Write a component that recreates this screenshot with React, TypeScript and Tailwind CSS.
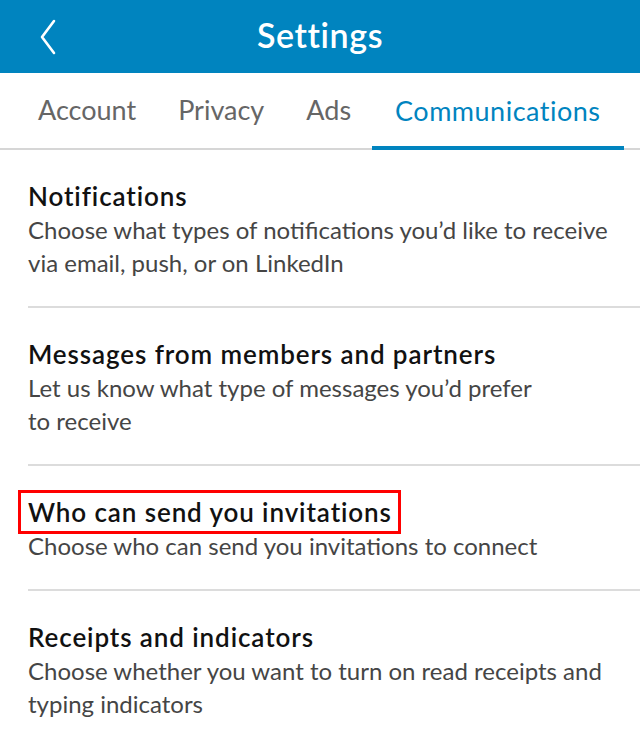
const tabs = ["Account", "Privacy", "Ads", "Communications"];

const sections = [
  {
    title: "Notifications",
    desc: ["Choose what types of notifications you’d like to receive", "via email, push, or on LinkedIn"],
  },
  {
    title: "Messages from members and partners",
    desc: ["Let us know what type of messages you’d prefer", "to receive"],
  },
  {
    title: "Who can send you invitations",
    desc: ["Choose who can send you invitations to connect"],
    boxed: true,
  },
  {
    title: "Receipts and indicators",
    desc: ["Choose whether you want to turn on read receipts and", "typing indicators"],
  },
];

const App: React.FC = () => {
  return (
    <div className="w-[640px] h-[734px] overflow-hidden bg-white font-['Lato',sans-serif]">
      <header className="relative h-[73px] bg-[#0084bf] flex items-center justify-center pb-[4px]">
        <svg className="absolute left-[39px] top-[19px]" width="18" height="36" viewBox="0 0 18 36">
          <path d="M15 2 L3 18 L15 34" fill="none" stroke="white" strokeWidth="2.6" strokeLinecap="round" strokeLinejoin="round" />
        </svg>
        <h1 className="text-white text-[34px] font-semibold tracking-[0.6px]">Settings</h1>
      </header>

      <nav className="h-[77px] flex items-stretch pl-[17px] border-b-2 border-[#d6d6d6]">
        {tabs.map((t, i) => {
          const active = i === tabs.length - 1;
          return (
            <div
              key={t}
              className={
                active
                  ? "flex items-center px-[23px] text-[27px] tracking-[0.5px] text-[#0084bf] border-b-[4px] border-[#0084bf] -mb-[2px] pt-[4px]"
                  : "flex items-center px-[21px] text-[27px] text-[#666666]"
              }
            >
              {t}
            </div>
          );
        })}
      </nav>

      <div className="pl-[28px]">
        {sections.map((s, i) => (
          <div
            key={s.title}
            className={
              i < sections.length - 1
                ? "border-b-2 border-[#dcdcdc] pt-[29px] pb-[27px]"
                : "pt-[29px]"
            }
          >
            <div>
              <div className="relative inline-block">
                <h2 className="text-[26px] leading-[34px] tracking-[0.9px] font-semibold text-[#111111]">{s.title}</h2>
                {s.boxed && (
                  <div className="absolute -left-[10px] -right-[9px] -top-[5px] -bottom-[5px] border-[3px] border-[#ff0000]" />
                )}
              </div>
            </div>
            {s.desc.map((d) => (
              <p key={d} className="text-[24px] leading-[33px] text-[#454545] font-normal">
                {d}
              </p>
            ))}
          </div>
        ))}
      </div>
    </div>
  );
};

export default App;
